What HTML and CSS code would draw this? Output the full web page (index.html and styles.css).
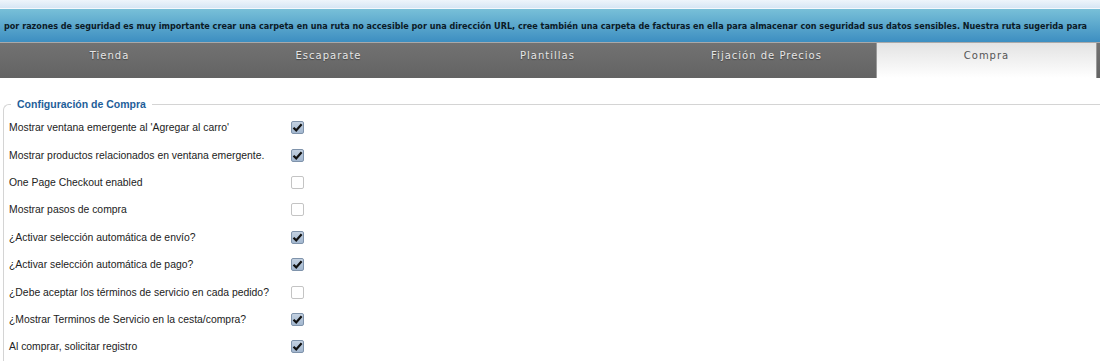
FILE: index.html
```html
<!DOCTYPE html>
<html lang="es">
<head>
    <meta charset="UTF-8">
    <title>Configuración</title>
    <link rel="stylesheet" href="styles.css">
</head>
<body>
    <div class="topstrip"></div>
    <div class="aviso">
        <span>por razones de seguridad es muy importante crear una carpeta en una ruta no accesible por una dirección URL, cree también una carpeta de facturas en ella para almacenar con seguridad sus datos sensibles. Nuestra ruta sugerida para</span>
    </div>
    <ul class="tabs">
        <li>Tienda</li>
        <li>Escaparate</li>
        <li>Plantillas</li>
        <li class="previo">Fijación de Precios</li>
        <li class="activo">Compra</li>
    </ul>
    <fieldset class="grupo">
        <legend>Configuración de Compra</legend>
        <div class="fila"><label>Mostrar ventana emergente al 'Agregar al carro'</label><span class="chk on"><svg viewBox="0 0 13 13"><path d="M2.5 6.8 L5.2 9.4 L10.6 3.2"/></svg></span></div>
        <div class="fila"><label>Mostrar productos relacionados en ventana emergente.</label><span class="chk on"><svg viewBox="0 0 13 13"><path d="M2.5 6.8 L5.2 9.4 L10.6 3.2"/></svg></span></div>
        <div class="fila"><label>One Page Checkout enabled</label><span class="chk"></span></div>
        <div class="fila"><label>Mostrar pasos de compra</label><span class="chk"></span></div>
        <div class="fila"><label>¿Activar selección automática de envío?</label><span class="chk on"><svg viewBox="0 0 13 13"><path d="M2.5 6.8 L5.2 9.4 L10.6 3.2"/></svg></span></div>
        <div class="fila"><label>¿Activar selección automática de pago?</label><span class="chk on"><svg viewBox="0 0 13 13"><path d="M2.5 6.8 L5.2 9.4 L10.6 3.2"/></svg></span></div>
        <div class="fila"><label>¿Debe aceptar los términos de servicio en cada pedido?</label><span class="chk"></span></div>
        <div class="fila"><label>¿Mostrar Terminos de Servicio en la cesta/compra?</label><span class="chk on"><svg viewBox="0 0 13 13"><path d="M2.5 6.8 L5.2 9.4 L10.6 3.2"/></svg></span></div>
        <div class="fila"><label>Al comprar, solicitar registro</label><span class="chk on"><svg viewBox="0 0 13 13"><path d="M2.5 6.8 L5.2 9.4 L10.6 3.2"/></svg></span></div>
    </fieldset>
</body>
</html>
```

FILE: styles.css
```css
body{
    margin: 0;
    background-color: #fff;
    font-family: "Liberation Sans", Arial, sans-serif;
    overflow: hidden;
}
.topstrip{
    height: 8px;
    background: linear-gradient(#eef5fb, #d6e6f4);
    border-bottom: 1px solid #f4f8fc;
}
.aviso{
    height: 33px;
    background: linear-gradient(#78c0d8, #3d8ec1);
    display: flex;
    align-items: center;
    overflow: hidden;
    white-space: nowrap;
    padding-left: 4px;
}
.aviso span{
    font-family: "DejaVu Sans", Verdana, sans-serif;
    font-weight: bold;
    font-size: 8.1px;
    color: #0b1a26;
}
.tabs{
    list-style: none;
    margin: 0;
    padding: 0 3px 0 0;
    display: flex;
    height: 35px;
    background: linear-gradient(#727272, #636363);
    border-top: 1px solid #a9a9a9;
}
.tabs li{
    flex: 1;
    text-align: center;
    line-height: 26px;
    font-family: "DejaVu Sans", Verdana, sans-serif;
    font-size: 10px;
    letter-spacing: 1px;
    color: #e6e6e6;
    text-shadow: 0 1px 1px #444;
}
.tabs li.previo{
    border-right: 1px solid #9a9a9a;
}
.tabs li.activo{
    background: linear-gradient(#e3e3e3, #ffffff);
    color: #555;
    text-shadow: none;
    border-right: 1px solid #9a9a9a;
}
.grupo{
    margin: 20px 0 0 3px;
    padding: 4px 0 0 5px;
    border: 1px solid #d4d4d4;
    border-radius: 6px 0 0 0;
    border-right: 0;
    border-bottom: 0;
}
.grupo legend{
    margin-left: 2px;
    padding: 0 6px;
    font-size: 10.5px;
    font-weight: bold;
    color: #1e5e99;
}
.fila{
    display: flex;
    align-items: center;
    height: 27.4px;
}
.fila label{
    width: 282px;
    font-size: 10.4px;
    color: #222;
}
.chk{
    width: 11px;
    height: 11px;
    border: 1px solid #c4c4c4;
    border-radius: 2px;
    background: #fff;
    display: flex;
}
.chk.on{
    background: linear-gradient(#c3d1e1, #a3b7cf);
    border-color: #7f93ab;
}
.chk svg{
    width: 13px;
    height: 13px;
    margin: -1px;
}
.chk path{
    fill: none;
    stroke: #111;
    stroke-width: 2.2;
}
```
